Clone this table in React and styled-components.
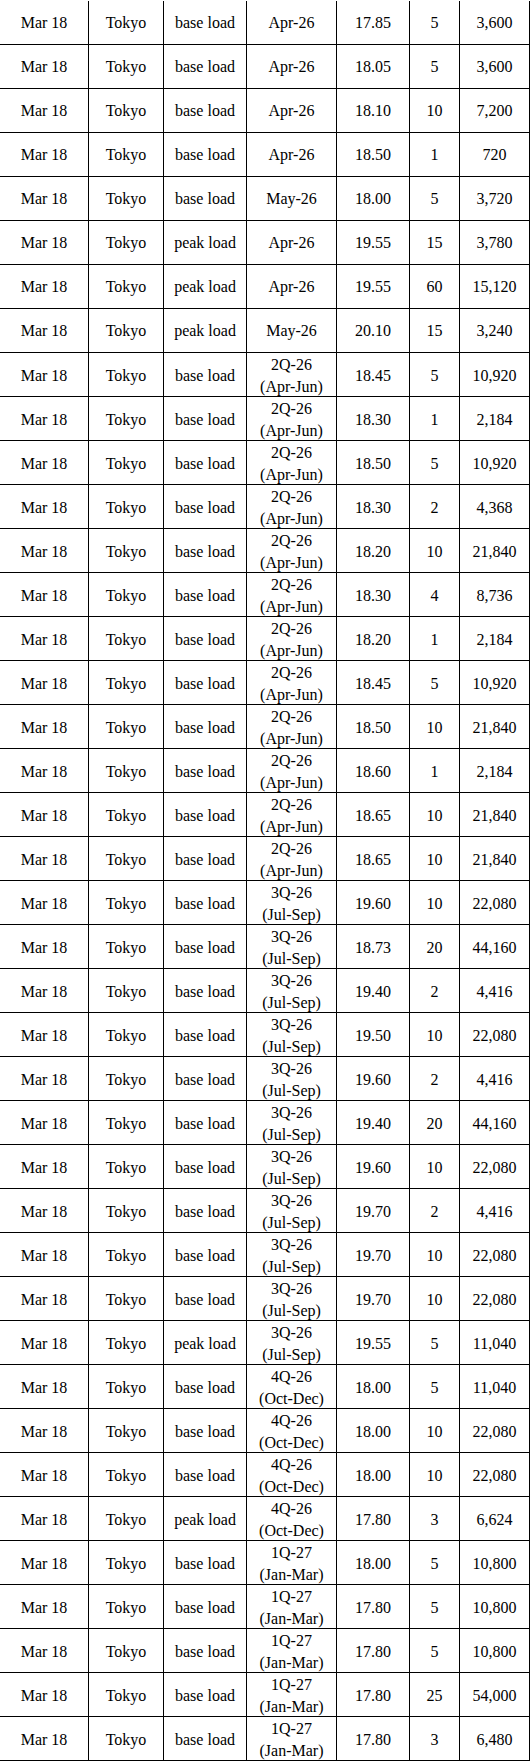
import React from "react";
import styled, { createGlobalStyle } from "styled-components";

const GlobalStyle = createGlobalStyle`
  html, body {
    margin: 0;
    padding: 0;
    background: #ffffff;
  }
  body {
    font-family: "Liberation Serif", "Times New Roman", serif;
    color: #000000;
  }
`;

const Table = styled.div`
  width: 530px;
  padding-top: 1px;
  box-sizing: border-box;
`;

const Row = styled.div`
  display: grid;
  grid-template-columns: 89px 75px 83px 90px 73px 50px 70px;
  height: 44px;
  box-sizing: border-box;
  border-bottom: 1px solid #000000;
`;

const Cell = styled.div`
  display: flex;
  flex-direction: column;
  align-items: center;
  justify-content: center;
  text-align: center;
  box-sizing: border-box;
  border-right: 1px solid #000000;
  font-family: "Liberation Serif", "Times New Roman", serif;
  font-size: 16px;
  line-height: 22px;
  padding-top: ${(p) => (p.$twoLine ? "1px" : "0")};
  color: #000000;
  white-space: nowrap;
  overflow: visible;
`;

const Line = styled.span`
  display: block;
`;

const periods = {
  "2Q": ["2Q-26", "(Apr-Jun)"],
  "3Q": ["3Q-26", "(Jul-Sep)"],
  "4Q": ["4Q-26", "(Oct-Dec)"],
  "1Q": ["1Q-27", "(Jan-Mar)"],
};

const rows = [
  ["base load", "Apr-26", "17.85", "5", "3,600"],
  ["base load", "Apr-26", "18.05", "5", "3,600"],
  ["base load", "Apr-26", "18.10", "10", "7,200"],
  ["base load", "Apr-26", "18.50", "1", "720"],
  ["base load", "May-26", "18.00", "5", "3,720"],
  ["peak load", "Apr-26", "19.55", "15", "3,780"],
  ["peak load", "Apr-26", "19.55", "60", "15,120"],
  ["peak load", "May-26", "20.10", "15", "3,240"],
  ["base load", "2Q", "18.45", "5", "10,920"],
  ["base load", "2Q", "18.30", "1", "2,184"],
  ["base load", "2Q", "18.50", "5", "10,920"],
  ["base load", "2Q", "18.30", "2", "4,368"],
  ["base load", "2Q", "18.20", "10", "21,840"],
  ["base load", "2Q", "18.30", "4", "8,736"],
  ["base load", "2Q", "18.20", "1", "2,184"],
  ["base load", "2Q", "18.45", "5", "10,920"],
  ["base load", "2Q", "18.50", "10", "21,840"],
  ["base load", "2Q", "18.60", "1", "2,184"],
  ["base load", "2Q", "18.65", "10", "21,840"],
  ["base load", "2Q", "18.65", "10", "21,840"],
  ["base load", "3Q", "19.60", "10", "22,080"],
  ["base load", "3Q", "18.73", "20", "44,160"],
  ["base load", "3Q", "19.40", "2", "4,416"],
  ["base load", "3Q", "19.50", "10", "22,080"],
  ["base load", "3Q", "19.60", "2", "4,416"],
  ["base load", "3Q", "19.40", "20", "44,160"],
  ["base load", "3Q", "19.60", "10", "22,080"],
  ["base load", "3Q", "19.70", "2", "4,416"],
  ["base load", "3Q", "19.70", "10", "22,080"],
  ["base load", "3Q", "19.70", "10", "22,080"],
  ["peak load", "3Q", "19.55", "5", "11,040"],
  ["base load", "4Q", "18.00", "5", "11,040"],
  ["base load", "4Q", "18.00", "10", "22,080"],
  ["base load", "4Q", "18.00", "10", "22,080"],
  ["peak load", "4Q", "17.80", "3", "6,624"],
  ["base load", "1Q", "18.00", "5", "10,800"],
  ["base load", "1Q", "17.80", "5", "10,800"],
  ["base load", "1Q", "17.80", "5", "10,800"],
  ["base load", "1Q", "17.80", "25", "54,000"],
  ["base load", "1Q", "17.80", "3", "6,480"],
];

function PeriodCell({ period }) {
  const lines = periods[period];
  if (!lines) return <Cell>{period}</Cell>;
  return (
    <Cell $twoLine>
      {lines.map((l) => (
        <Line key={l}>{l}</Line>
      ))}
    </Cell>
  );
}

export default function App() {
  return (
    <>
      <GlobalStyle />
      <Table>
        {rows.map(([type, period, price, qty, total], i) => (
          <Row key={i}>
            <Cell>Mar 18</Cell>
            <Cell>Tokyo</Cell>
            <Cell>{type}</Cell>
            <PeriodCell period={period} />
            <Cell>{price}</Cell>
            <Cell>{qty}</Cell>
            <Cell>{total}</Cell>
          </Row>
        ))}
      </Table>
    </>
  );
}
